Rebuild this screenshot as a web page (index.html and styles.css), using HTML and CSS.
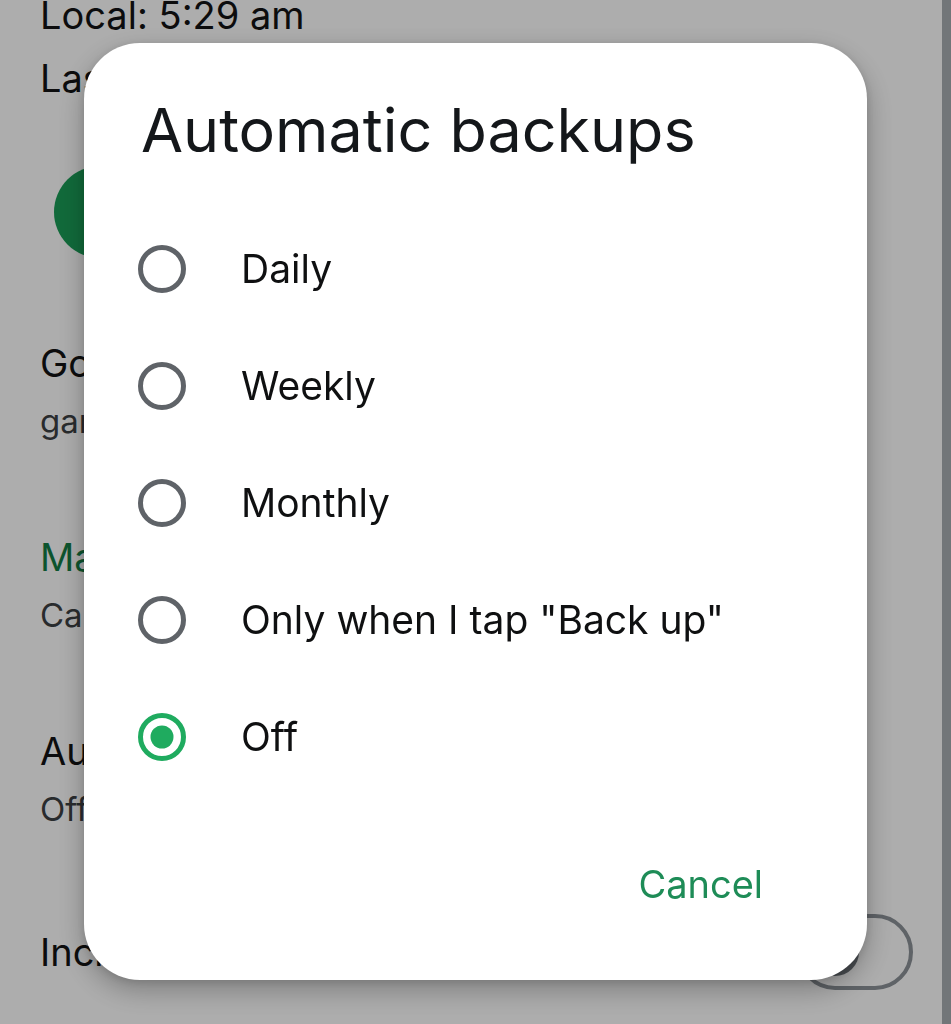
FILE: index.html
```html
<!DOCTYPE html>
<html lang="en">
<head>
<meta charset="utf-8">
<title>Automatic backups</title>
<link rel="stylesheet" href="styles.css">
</head>
<body>
<div class="page">
  <div class="settings">
    <div class="line primary first">Local: 5:29 am</div>
    <div class="line primary last">Last backup</div>
    <div class="avatar-row"><span class="avatar"></span></div>
    <div class="item account">
      <div class="line primary">Google Account</div>
      <div class="line secondary">gamer@gmail.com</div>
    </div>
    <div class="item">
      <div class="line link">Manage Google storage</div>
      <div class="line secondary">Can't store backup</div>
    </div>
    <div class="item">
      <div class="line primary">Automatic backups</div>
      <div class="line secondary">Off</div>
    </div>
    <div class="item toggle-item">
      <div class="line primary">Include videos</div>
      <span class="switch"><span class="thumb"></span></span>
    </div>
  </div>
  <div class="scrollbar"></div>
</div>

<div class="scrim">
  <div class="dialog" role="dialog" aria-labelledby="dlg-title">
    <h1 class="dialog-title" id="dlg-title">Automatic backups</h1>
    <ul class="options">
      <li class="option">
        <svg class="radio" viewBox="0 0 48 48"><circle cx="24" cy="24" r="21.5"/></svg>
        <span class="option-label">Daily</span>
      </li>
      <li class="option">
        <svg class="radio" viewBox="0 0 48 48"><circle cx="24" cy="24" r="21.5"/></svg>
        <span class="option-label">Weekly</span>
      </li>
      <li class="option">
        <svg class="radio" viewBox="0 0 48 48"><circle cx="24" cy="24" r="21.5"/></svg>
        <span class="option-label">Monthly</span>
      </li>
      <li class="option">
        <svg class="radio" viewBox="0 0 48 48"><circle cx="24" cy="24" r="21.5"/></svg>
        <span class="option-label">Only when I tap "Back up"</span>
      </li>
      <li class="option selected">
        <svg class="radio" viewBox="0 0 48 48"><circle cx="24" cy="24" r="21.5"/><circle class="dot" cx="24" cy="24" r="11.5"/></svg>
        <span class="option-label">Off</span>
      </li>
    </ul>
    <div class="actions">
      <button class="text-button" type="button">Cancel</button>
    </div>
  </div>
</div>
</body>
</html>
```

FILE: styles.css
```css
* { box-sizing: border-box; }
html, body {
  margin: 0;
  padding: 0;
  width: 951px;
  height: 1024px;
  overflow: hidden;
}
body {
  font-family: "Inter", "DejaVu Sans", sans-serif;
  background: #ffffff;
}
.page {
  display: flex;
  height: 1024px;
}
.settings {
  flex: 1;
  padding-left: 40px;
  display: flex;
  flex-direction: column;
}
.scrollbar {
  width: 9px;
  background: #a8aeb3;
}
.line {
  white-space: nowrap;
  line-height: 1;
}
.primary {
  font-size: 38px;
  color: #121314;
}
.secondary {
  font-size: 33px;
  color: #3c4043;
  margin-top: 23px;
}
.link {
  font-size: 38px;
  color: #137c44;
}
.first { margin-top: -4px; }
.last { margin-top: 25px; }
.avatar-row { margin-top: 69px; padding-left: 14px; }
.avatar {
  display: block;
  width: 92px;
  height: 92px;
  border-radius: 50%;
  background: #1a9d57;
}
.item { margin-top: 100px; }
.item.account { margin-top: 86px; }
.item.toggle-item {
  margin-top: 88px;
  display: flex;
  align-items: center;
  justify-content: space-between;
  padding-right: 29px;
}
.switch {
  position: relative;
  width: 116px;
  height: 76px;
  border: 4px solid #8c9298;
  border-radius: 38px;
}
.thumb {
  position: absolute;
  left: 10px;
  top: 10px;
  width: 48px;
  height: 48px;
  border-radius: 50%;
  background: #70767c;
}

.scrim {
  position: fixed;
  inset: 0;
  background: rgba(0, 0, 0, 0.32);
}
.dialog {
  position: absolute;
  left: 84px;
  top: 43px;
  width: 783px;
  height: 937px;
  background: #ffffff;
  border-radius: 56px;
  box-shadow: 0 10px 28px rgba(0, 0, 0, 0.28), 0 2px 8px rgba(0, 0, 0, 0.12);
  display: flex;
  flex-direction: column;
  padding: 0 0 0 54px;
}
.dialog-title {
  margin: 49px 0 0 3px;
  font-size: 61px;
  font-weight: 400;
  line-height: 76px;
  color: #14171a;
  white-space: nowrap;
}
.options {
  list-style: none;
  margin: 42px 0 0 0;
  padding: 0;
}
.option {
  height: 117px;
  display: flex;
  align-items: center;
  gap: 55px;
}
.radio {
  width: 48px;
  height: 48px;
  flex: none;
}
.radio circle {
  fill: none;
  stroke: #5f6368;
  stroke-width: 5;
}
.selected .radio circle { stroke: #1fab5f; }
.selected .radio .dot {
  fill: #1fab5f;
  stroke: none;
}
.option-label {
  font-size: 39px;
  color: #0f1011;
  white-space: nowrap;
}
.actions {
  display: flex;
  justify-content: flex-end;
  padding-right: 104px;
  margin-top: 70px;
}
.text-button {
  border: 0;
  background: none;
  padding: 0;
  font-family: inherit;
  font-size: 38px;
  line-height: 1;
  color: #1e8c57;
}
```
